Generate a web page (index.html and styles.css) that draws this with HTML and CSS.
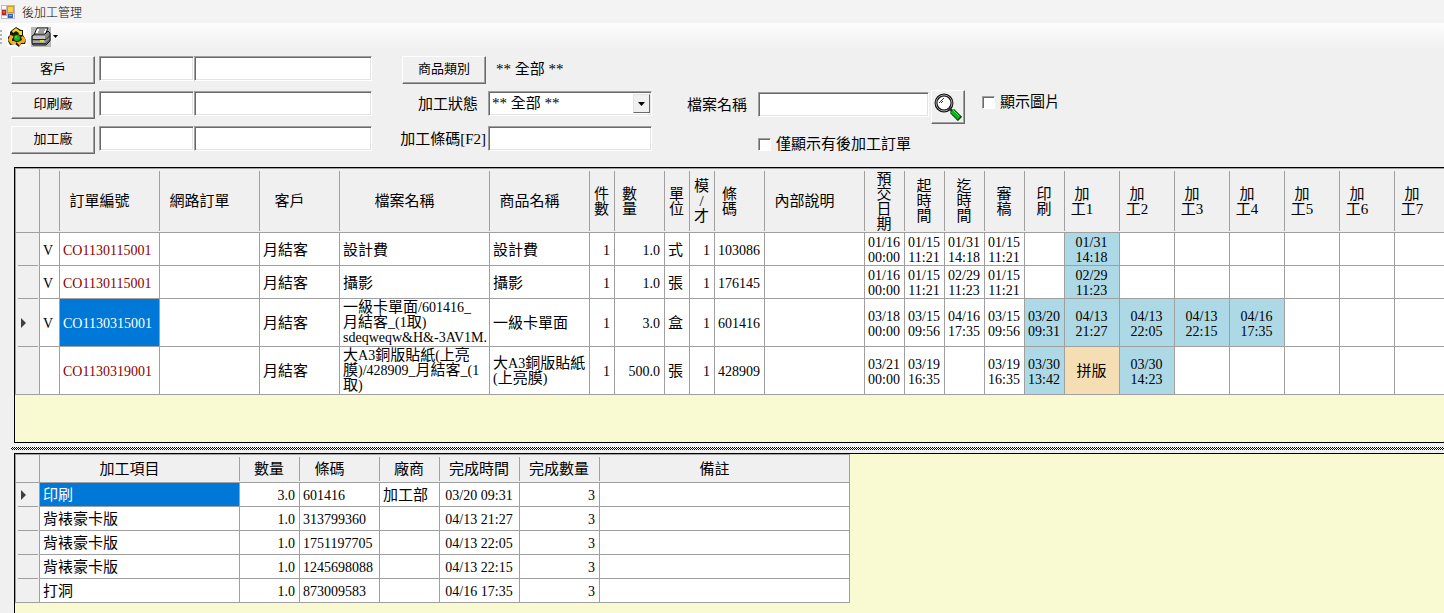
FILE: index.html
```html
<!DOCTYPE html>
<html lang="zh-Hant">
<head>
<meta charset="utf-8">
<title>後加工管理</title>
<link rel="stylesheet" href="styles.css">
</head>
<body>
<header class="titlebar">
  <svg class="app-icon" width="14" height="14" viewBox="0 0 14 14" aria-hidden="true">
    <rect width="14" height="14" fill="#b9bcc2"/>
    <rect x="1" y="1" width="4" height="3" fill="#fff"/>
    <rect x="1" y="5" width="4" height="5" fill="#b8291c"/><rect x="2" y="6" width="2" height="2" fill="#e8604c"/>
    <rect x="6" y="1" width="7" height="7" fill="#d99a14"/><rect x="7" y="2" width="5" height="5" fill="#fbd04e"/>
    <rect x="1" y="11" width="5" height="2" fill="#fff"/>
    <rect x="7" y="9" width="5" height="4" fill="#2f62d0"/><rect x="8" y="10" width="3" height="1" fill="#7fa8f4"/>
    <rect x="12" y="9" width="1" height="4" fill="#fff"/>
  </svg>
  <h1>後加工管理</h1>
</header>
<nav class="toolbar" aria-label="工具列">
  <span class="grip"></span>
  <button class="tool" type="button" aria-label="重新整理">
    <svg width="20" height="20" viewBox="0 0 20 20">
      <rect width="20" height="20" fill="#fff"/>
      <path d="M5 3 9 0 14 3 16 3 16 8 19 13 18 17 14 17 12 20 8 17 3 18 1 14 1 10 3 8 3 5Z" fill="#1c1804"/>
      <path d="M5 4 9 1 13 4 15 4 15 8 11 8 12 6 9 4 6 6Z" fill="#f4d824"/>
      <path d="M3 8 7 9 6 12 5 11 5 14 9 14 9 17 4 17 1 13 2 11Z" fill="#f8ac20"/>
      <path d="M16 9 19 13 17 16 14 16 13 19 9 15 13 12 13 14 15 13 14 10Z" fill="#f8a81c"/>
      <circle cx="10" cy="11" r="4" fill="#0c3a0c"/><circle cx="10" cy="11" r="3" fill="#22b022"/><circle cx="9" cy="10" r="1" fill="#5ae04c"/>
    </svg>
  </button>
  <button class="tool print" type="button" aria-label="列印">
    <svg width="20" height="20" viewBox="0 0 20 20">
      <rect width="20" height="20" fill="#b8b8b8"/>
      <path d="M6 1H17L14 8H3Z" fill="#fff" stroke="#111"/>
      <path d="M8 3H14M7 5H13" stroke="#444"/>
      <path d="M1 9 4 7H14L17 4 19 6V14L15 18H2L1 16Z" fill="#8a8a8a" stroke="#111"/>
      <path d="M2 9H14V12H2Z" fill="#c4c4c4"/>
      <path d="M1 12.500H15L19 8.500" fill="none" stroke="#222"/>
      <path d="M2 14H14V16H2Z" fill="#a8a8a8"/>
      <path d="M1 16.500H15L19 12.500" fill="none" stroke="#333"/>
      <path d="M9 13H13V15H9Z" fill="#e5dc20"/>
    </svg>
    <svg width="5" height="3" viewBox="0 0 5 3"><path d="M0 0H5L2.500 3Z"/></svg>
  </button>
</nav>
<main>
  <form class="filters">
    <div class="lookups">
      <div class="lookup"><button class="btn" type="button">客戶</button><input class="code" type="text" aria-label="客戶代號"><input class="name" type="text" aria-label="客戶名稱"></div>
      <div class="lookup"><button class="btn" type="button">印刷廠</button><input class="code" type="text" aria-label="印刷廠代號"><input class="name" type="text" aria-label="印刷廠名稱"></div>
      <div class="lookup"><button class="btn" type="button">加工廠</button><input class="code" type="text" aria-label="加工廠代號"><input class="name" type="text" aria-label="加工廠名稱"></div>
    </div>
    <div class="criteria">
      <button class="btn" type="button">商品類別</button><output>** 全部 **</output>
      <label class="state" for="state">加工狀態</label>
      <div class="combo"><select id="state"><option>** 全部 **</option></select><span class="drop"><svg width="7" height="4" viewBox="0 0 7 4"><path d="M0 0H7L3.500 4Z"/></svg></span></div>
      <label for="barcode">加工條碼[F2]</label><input id="barcode" type="text">
    </div>
    <div class="file">
      <label for="file">檔案名稱</label>
      <div class="search">
        <input id="file" type="text">
        <button class="btn find" type="button" aria-label="搜尋">
          <svg width="28" height="28" viewBox="0 0 28 28">
            <circle cx="10" cy="10" r="8" fill="#fff" stroke="#111" stroke-width="3"/>
            <circle cx="10" cy="10" r="8" fill="none" stroke="#a4a4a4"/>
            <path d="M5 10 10 5M7 10 9 8" stroke="#333"/>
            <path d="M15 15 19 19" stroke="#333" stroke-width="3"/>
            <path d="M18 18 26 26" stroke="#063f06" stroke-width="6"/>
            <path d="M18 18 25 25" stroke="#08b51a" stroke-width="4"/>
            <path d="M19 17 25 23" stroke="#3cf04a"/>
          </svg>
        </button>
      </div>
      <label class="check"><input type="checkbox">顯示圖片</label>
      <label class="check only"><input type="checkbox">僅顯示有後加工訂單</label>
    </div>
  </form>

  <section class="panel orders">
    <table>
      <colgroup><col class="w25"><col class="w20"><col class="w100"><col class="w100"><col class="w80"><col class="w150"><col class="w100"><col class="w25"><col class="w50"><col class="w25"><col class="w25"><col class="w50"><col class="w100"><col class="w40"><col class="w40"><col class="w40"><col class="w40"><col class="w40"><col class="w55"><col class="w55"><col class="w55"><col class="w55"><col class="w55"><col class="w55"><col class="w55"></colgroup>
      <thead><tr><th class="rowhead"></th><th></th><th class="sort">訂單編號</th><th class="sort">網路訂單</th><th class="sort">客戶</th><th class="sort">檔案名稱</th><th class="sort">商品名稱</th><th>件<br>數</th><th class="sort">數<br>量</th><th>單<br>位</th><th>模<br>/<br>才</th><th class="sort">條<br>碼</th><th class="sort">內部說明</th><th>預<br>交<br>日<br>期</th><th>起<br>時<br>間</th><th>迄<br>時<br>間</th><th>審<br>稿</th><th>印<br>刷</th><th class="sort">加<br>工1</th><th class="sort">加<br>工2</th><th class="sort">加<br>工3</th><th class="sort">加<br>工4</th><th class="sort">加<br>工5</th><th class="sort">加<br>工6</th><th class="sort">加<br>工7</th></tr></thead>
      <tbody>
        <tr><th class="rowhead"></th><td class="n">V</td><td class="n order">CO1130115001</td><td></td><td>月結客</td><td>設計費</td><td>設計費</td><td class="n r">1</td><td class="n r">1.0</td><td>式</td><td class="n r">1</td><td class="n">103086</td><td></td><td class="n c">01/16<br>00:00</td><td class="n c">01/15<br>11:21</td><td class="n c">01/31<br>14:18</td><td class="n c">01/15<br>11:21</td><td></td><td class="n c done">01/31<br>14:18</td><td></td><td></td><td></td><td></td><td></td><td></td></tr>
        <tr><th class="rowhead"></th><td class="n">V</td><td class="n order">CO1130115001</td><td></td><td>月結客</td><td>攝影</td><td>攝影</td><td class="n r">1</td><td class="n r">1.0</td><td>張</td><td class="n r">1</td><td class="n">176145</td><td></td><td class="n c">01/16<br>00:00</td><td class="n c">01/15<br>11:21</td><td class="n c">02/29<br>11:23</td><td class="n c">01/15<br>11:21</td><td></td><td class="n c done">02/29<br>11:23</td><td></td><td></td><td></td><td></td><td></td><td></td></tr>
        <tr class="tall"><th class="rowhead"><svg width="5" height="10" viewBox="0 0 5 10"><path d="M0 0 5 5 0 10Z"/></svg></th><td class="n">V</td><td class="n order selected">CO1130315001</td><td></td><td>月結客</td><td class="n mixed"><span>一級卡單面</span>/601416_<br><span>月結客</span>_(1<span>取</span>)<br>sdeqweqw&amp;H&amp;-3AV1M.</td><td>一級卡單面</td><td class="n r">1</td><td class="n r">3.0</td><td>盒</td><td class="n r">1</td><td class="n">601416</td><td></td><td class="n c">03/18<br>00:00</td><td class="n c">03/15<br>09:56</td><td class="n c">04/16<br>17:35</td><td class="n c">03/15<br>09:56</td><td class="n c done">03/20<br>09:31</td><td class="n c done">04/13<br>21:27</td><td class="n c done">04/13<br>22:05</td><td class="n c done">04/13<br>22:15</td><td class="n c done">04/16<br>17:35</td><td></td><td></td><td></td></tr>
        <tr class="tall"><th class="rowhead"></th><td></td><td class="n order">CO1130319001</td><td></td><td>月結客</td><td class="n mixed"><span>大</span>A3<span>銅版貼紙</span>(<span>上亮</span><br><span>膜</span>)/428909_<span>月結客</span>_(1<br><span>取</span>)</td><td class="n mixed"><span>大</span>A3<span>銅版貼紙</span><br>(<span>上亮膜</span>)</td><td class="n r">1</td><td class="n r">500.0</td><td>張</td><td class="n r">1</td><td class="n">428909</td><td></td><td class="n c">03/21<br>00:00</td><td class="n c">03/19<br>16:35</td><td></td><td class="n c">03/19<br>16:35</td><td class="n c done">03/30<br>13:42</td><td class="c merged">拼版</td><td class="n c done">03/30<br>14:23</td><td></td><td></td><td></td><td></td><td></td></tr>
      </tbody>
    </table>
  </section>

  <div class="splitter" role="separator"></div>

  <section class="panel items">
    <table>
      <colgroup><col class="w25"><col class="w200"><col class="w60"><col class="w80"><col class="w60"><col class="w80"><col class="w80"><col class="w250"></colgroup>
      <thead><tr><th class="rowhead"></th><th class="sort">加工項目</th><th>數量</th><th class="sort">條碼</th><th>廠商</th><th>完成時間</th><th>完成數量</th><th class="sort">備註</th></tr></thead>
      <tbody>
        <tr><th class="rowhead"><svg width="5" height="10" viewBox="0 0 5 10"><path d="M0 0 5 5 0 10Z"/></svg></th><td class="selected">印刷</td><td class="n r">3.0</td><td class="n">601416</td><td>加工部</td><td class="n c">03/20 09:31</td><td class="n r">3</td><td></td></tr>
        <tr><th class="rowhead"></th><td>背裱豪卡版</td><td class="n r">1.0</td><td class="n">313799360</td><td></td><td class="n c">04/13 21:27</td><td class="n r">3</td><td></td></tr>
        <tr><th class="rowhead"></th><td>背裱豪卡版</td><td class="n r">1.0</td><td class="n">1751197705</td><td></td><td class="n c">04/13 22:05</td><td class="n r">3</td><td></td></tr>
        <tr><th class="rowhead"></th><td>背裱豪卡版</td><td class="n r">1.0</td><td class="n">1245698088</td><td></td><td class="n c">04/13 22:15</td><td class="n r">3</td><td></td></tr>
        <tr><th class="rowhead"></th><td>打洞</td><td class="n r">1.0</td><td class="n">873009583</td><td></td><td class="n c">04/16 17:35</td><td class="n r">3</td><td></td></tr>
      </tbody>
    </table>
  </section>
</main>
</body>
</html>
```
FILE: styles.css
```css
:root {
  --face: #f0f0f0;
  --line: #a0a0a0;
  --shadow: #696969;
}
* { box-sizing: border-box; }
body {
  margin: 0;
  min-height: 100vh;
  display: flex;
  flex-direction: column;
  overflow-x: hidden;
  background: var(--face);
  color: #000;
  font-family: "Liberation Serif", "Noto Sans CJK TC", serif;
  font-size: 15px;
  font-weight: 400;
  line-height: 15px;
}
button, input, select { font: inherit; color: inherit; }
svg { display: block; }

.titlebar {
  display: flex;
  align-items: center;
  gap: 7px;
  height: 23px;
  padding-left: 1px;
  background: #f3f3f3;
}
.titlebar h1 {
  margin: 0;
  font-family: "Noto Sans CJK TC", sans-serif;
  font-size: 12px;
  font-weight: 300;
}
.toolbar {
  display: flex;
  align-items: center;
  height: 27px;
  background: linear-gradient(#fdfdfd, var(--face));
}
.grip {
  width: 2px;
  height: 14px;
  margin-right: 5px;
  background: repeating-linear-gradient(#b4b4b4 0 2px, transparent 2px 4px);
}
.tool {
  display: flex;
  align-items: center;
  gap: 2px;
  margin-right: 4px;
  padding: 0;
  border: 0;
  background: none;
}

main {
  flex: 1;
  display: flex;
  flex-direction: column;
  min-width: 0;
}
.filters {
  display: flex;
  align-items: flex-start;
  padding: 6px 11px 13px;
}
.lookups { display: grid; gap: 7px; margin-right: 28px; }
.lookup { display: flex; align-items: flex-start; }
.btn {
  width: 84px;
  height: 28px;
  padding: 0 0 4px;
  border: 1px solid;
  border-color: #fff var(--shadow) var(--shadow) #fff;
  background: var(--face);
  box-shadow: inset -1px -1px 0 var(--line);
  font-size: 13px;
}
input[type="text"], .combo {
  height: 25px;
  border: 1px solid;
  border-color: var(--line) #fff #fff var(--line);
  border-radius: 0;
  background: #fff;
  box-shadow: inset 1px 1px 0 var(--shadow), inset -1px -1px 0 #e3e3e3;
}
.code { width: 95px; margin-left: 4px; }
.name { width: 178px; }

.criteria {
  display: grid;
  grid-template-columns: 88px 164px;
  grid-auto-rows: 28px;
  row-gap: 7px;
  align-items: start;
  margin-right: 35px;
}
.criteria .btn { justify-self: center; }
.criteria output { padding: 6px 0 0 8px; }
.criteria label { padding: 6px 2px 0 0; text-align: right; }
.criteria .state { padding-right: 10px; }
.combo { position: relative; }
.combo select {
  width: 100%;
  height: 23px;
  padding: 0 3px;
  border: 0;
  background: none;
  appearance: none;
}
.drop {
  position: absolute;
  top: 2px;
  right: 1px;
  width: 17px;
  height: 19px;
  display: grid;
  place-items: center;
  border: 1px solid;
  border-color: #e3e3e3 var(--shadow) var(--shadow) #e3e3e3;
  background: var(--face);
  pointer-events: none;
}
.file {
  display: grid;
  grid-template-columns: 71px auto auto;
  row-gap: 5px;
  align-items: start;
  margin-top: 34px;
}
.file > label { padding-top: 8px; }
.search { display: flex; align-items: flex-start; gap: 2px; }
.search input { width: 171px; margin-top: 2px; }
.find { width: 34px; height: 34px; padding: 1px 2px; }
.check { display: flex; align-items: center; gap: 5px; }
.search + .check { margin-left: 17px; padding-top: 5px; }
.only { grid-column: 2 / 4; }
.check input {
  appearance: none;
  width: 13px;
  height: 13px;
  margin: 0;
  border: 1px solid;
  border-color: var(--line) #fff #fff var(--line);
  background: #fff;
  box-shadow: inset 1px 1px 0 var(--shadow);
}
.check input:checked { background: radial-gradient(#000 3px, #fff 4px); }

.panel {
  margin-left: 14px;
  border: 1px solid #000;
  border-right: 0;
  background: #fafad2;
  overflow: hidden;
}
.orders { padding-bottom: 47px; }
.items { flex: 1; border-bottom: 0; }
.splitter {
  height: 3px;
  margin: 4px 0 3px 11px;
  background: repeating-conic-gradient(#000 0 25%, #fff 0 50%) 0 0 / 2px 2px;
}
table {
  table-layout: fixed;
  width: 0;
  border-spacing: 0;
  border-top: 1px solid var(--line);
}
.w20 { width: 20px; }
.w25 { width: 25px; }
.w40 { width: 40px; }
.w50 { width: 50px; }
.w55 { width: 55px; }
.w60 { width: 60px; }
.w80 { width: 80px; }
.w100 { width: 100px; }
.w150 { width: 150px; }
.w200 { width: 200px; }
.w250 { width: 250px; }

th, td {
  height: 24px;
  padding: 2px 3px 0;
  border-right: 1px solid var(--line);
  border-bottom: 1px solid var(--line);
  background-color: #fff;
  text-align: left;
  white-space: nowrap;
}
th {
  padding: 2px 2px 0 0;
  background-color: var(--face);
  font-weight: 400;
  text-align: center;
}
thead th {
  height: 28px;
  border-right: 0;
  background-image: linear-gradient(var(--line), var(--line));
  background-size: 1px calc(100% - 3px);
  background-position: right center;
  background-repeat: no-repeat;
}
.orders thead th { height: 64px; }
.orders td { height: 33px; }
.orders .tall td { height: 48px; }
.orders tbody .rowhead { height: auto; }
thead .sort { padding-right: 21px; }
.items thead th:last-child { background-size: 1px 100%; }
.rowhead { border-left: 1px solid var(--line); padding: 0 0 0 5px; }
thead .rowhead { background-size: 1px 100%; }
tbody tr:not(:last-child) .rowhead {
  border-bottom: 0;
  background-image: linear-gradient(var(--line), var(--line));
  background-size: 20px 1px;
  background-position: center bottom;
  background-repeat: no-repeat;
}
.rowhead svg { fill: #404040; }
.n { font-size: 14px; }
.r { padding-right: 4px; text-align: right; }
.c { padding: 2px 1px 0 0; text-align: center; }
.mixed { padding-top: 0; }
.mixed span { font-size: 15px; line-height: 1px; }
.order { color: #8b0000; }
.selected { background-color: #0078d7; color: #fff; }
.done { background-color: #add8e6; }
.merged { background-color: #f5deb3; }
```
